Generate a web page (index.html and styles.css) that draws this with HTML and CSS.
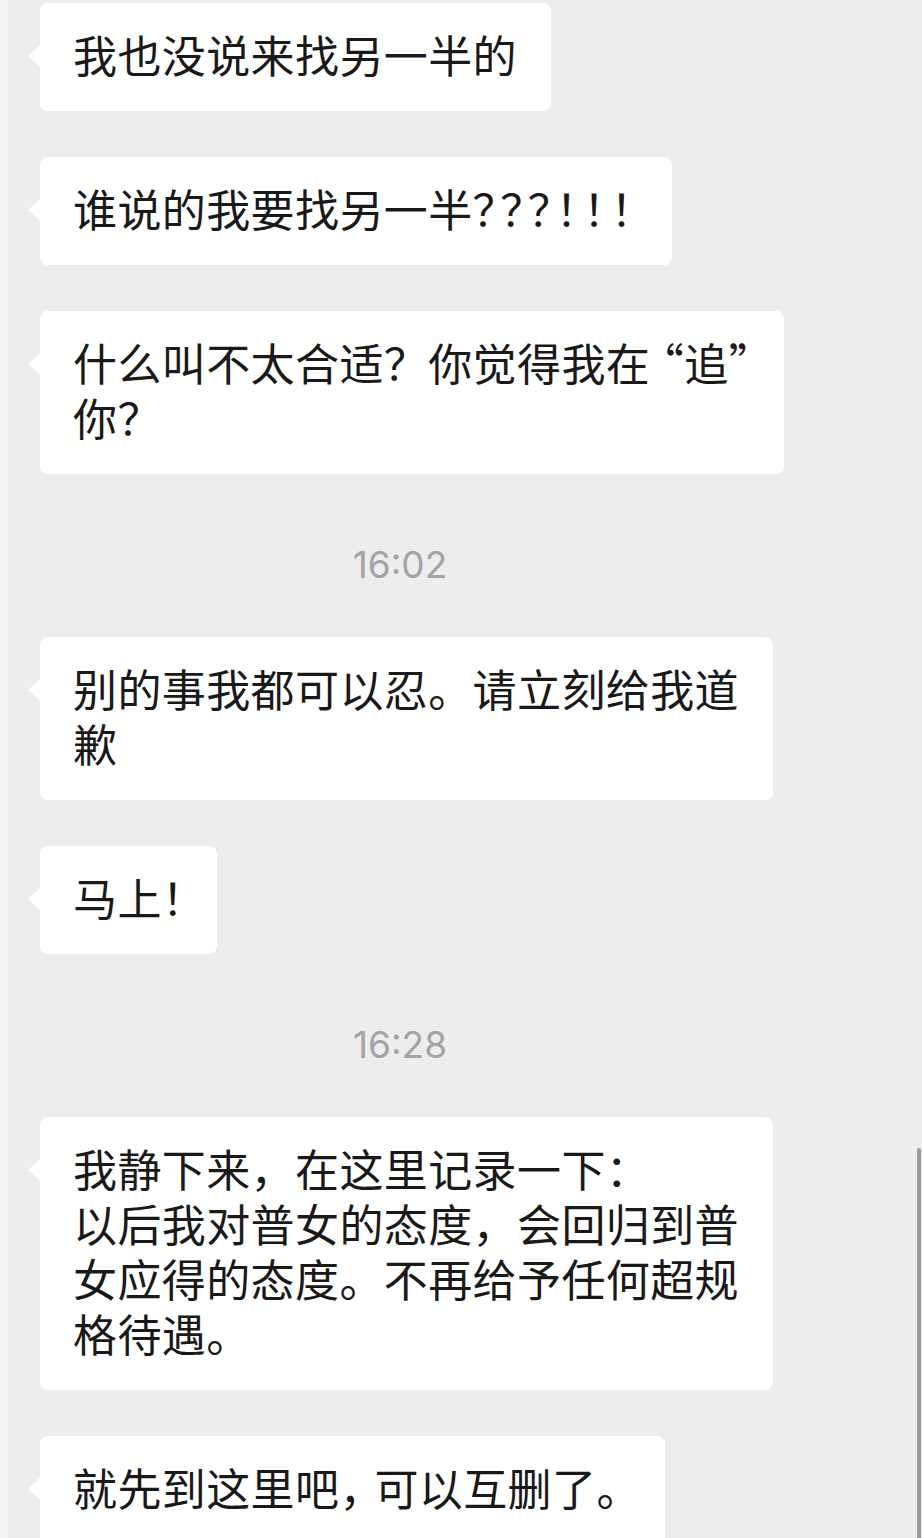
FILE: index.html
```html
<!DOCTYPE html>
<html lang="zh-CN">
<head>
    <meta charset="UTF-8">
    <meta name="viewport" content="width=device-width, initial-scale=1.0">
    <title>聊天记录</title>
    <link rel="stylesheet" href="styles.css">
</head>
<body>
    <main class="chat">
        <div class="msg"><p class="bubble">我也没说来找另一半的</p></div>
        <div class="msg"><p class="bubble">谁说的我要找另一半<span class="narrow">？？？！！！</span></p></div>
        <div class="msg"><p class="bubble">什么叫不太合适？你觉得我<span class="before-quote">在</span>“追<span class="close-quote">”</span><br>你？</p></div>

        <div class="time">16:02</div>

        <div class="msg"><p class="bubble">别的事我都可以忍。请立刻给我道<br>歉</p></div>
        <div class="msg"><p class="bubble">马上<span class="bang">！</span></p></div>

        <div class="time">16:28</div>

        <div class="msg"><p class="bubble">我静下来，在这里记录一下：<br>以后我对普女的态度，会回归到普<br>女应得的态度。不再给予任何超规<br>格待遇。</p></div>
        <div class="msg"><p class="bubble">就先到这里吧<span class="tight">，</span>可以互删了<span class="tight">。</span></p></div>
    </main>
    <div class="scrollbar"></div>
</body>
</html>
```

FILE: styles.css
```css
body {
    margin: 0;
    padding: 0;
    background-color: #ededed;
    font-family: "Noto Sans CJK SC", "Noto Sans", sans-serif;
    color: #191919;
    overflow: hidden;
    height: 1538px;
    border-left: 8px solid #f2f2f2;
}

.chat {
    display: flex;
    flex-direction: column;
    gap: 46px;
    padding: 3px 0 0 32px;
}

.msg {
    display: flex;
}

.bubble {
    position: relative;
    margin: 0;
    white-space: nowrap;
    padding: 24px 34px 29px 33px;
    background-color: #fff;
    border-radius: 8px;
    font-size: 44px;
    line-height: 55px;
    letter-spacing: 0.4px;
}

/* little tail pointing left */
.bubble::before {
    content: "";
    position: absolute;
    left: -12px;
    top: 41px;
    border-top: 12px solid transparent;
    border-bottom: 12px solid transparent;
    border-right: 13px solid #fff;
}

/* punctuation is narrower in the phone font */
.narrow {
    font-feature-settings: "halt";
    letter-spacing: 5.6px;
}

.bang {
    font-feature-settings: "halt";
    letter-spacing: -1px;
}

.tight {
    letter-spacing: -9px;
}

.before-quote {
    letter-spacing: -10px;
}

.close-quote {
    letter-spacing: -23px;
}

.time {
    width: 720px;
    padding: 25px 0 6px;
    text-align: center;
    font-family: Inter, "Noto Sans", sans-serif;
    font-size: 37px;
    line-height: 40px;
    color: #a3a3a3;
}

.scrollbar {
    position: absolute;
    right: 1px;
    top: 1148px;
    width: 4px;
    height: 400px;
    border-radius: 2px;
    background-color: #9a9a9a;
}
```
